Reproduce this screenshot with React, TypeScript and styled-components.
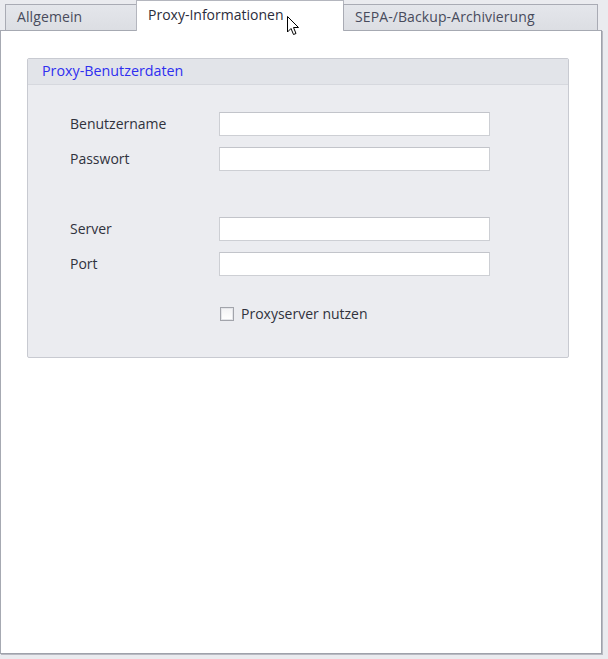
import * as React from 'react'
import styled, { createGlobalStyle } from 'styled-components'

const GlobalStyle = createGlobalStyle`
	html, body {
		margin: 0;
		padding: 0;
		background: #eaebef;
	}
	body {
		font-family: "Open Sans", "Noto Sans", "Liberation Sans", sans-serif;
		font-size: 14px;
	}
`

const Window = styled.div`
	position: relative;
	width: 608px;
	height: 659px;
	background: #eaebef;
	overflow: hidden;
`

const TabStrip = styled.div`
	display: flex;
	align-items: flex-end;
	height: 30px;
	padding-left: 5px;
	position: relative;
	z-index: 2;
`

const Tab = styled.div<{ $active?: boolean; $width: number }>`
	box-sizing: border-box;
	width: ${p => p.$width}px;
	height: ${p => (p.$active ? 31 : 26)}px;
	margin-left: -1px;
	margin-bottom: ${p => (p.$active ? -1 : 0)}px;
	padding-left: 11px;
	padding-top: ${p => (p.$active ? 5 : 3)}px;
	border: 1px solid ${p => (p.$active ? '#b4b6be' : '#a9abb4')};
	border-bottom: none;
	background: ${p => (p.$active ? '#ffffff' : 'linear-gradient(#e4e6eb, #dcdee3)')};
	color: ${p => (p.$active ? '#2b2d3c' : '#484b5c')};
	font-size: 14px;
	line-height: 18px;
	letter-spacing: ${p => (p.$active ? 0 : 0.1)}px;
	white-space: nowrap;
	&:first-child {
		margin-left: 0;
	}
`

const Panel = styled.div`
	box-sizing: border-box;
	width: 602px;
	height: 624px;
	background: #ffffff;
	border: 1px solid #a6a9b2;
	border-right-color: #9fa2ab;
	border-bottom-color: #9fa2ab;
	box-shadow: 1px 1px 0 #b8bac2;
	padding: 27px 0 0 26px;
`

const GroupBox = styled.div`
	box-sizing: border-box;
	width: 542px;
	height: 300px;
	border: 1px solid #c8cad1;
	border-radius: 2px;
	background: #ebecf0;
	display: flex;
	flex-direction: column;
`

const GroupHeader = styled.div`
	height: 25px;
	padding-left: 14px;
	background: #e2e4e9;
	border-bottom: 1px solid #d6d8de;
	color: #2f2ff0;
	font-size: 14.3px;
	line-height: 23px;
`

const GroupBody = styled.div`
	display: flex;
	flex-direction: column;
	padding: 27px 0 0 42px;
`

const FieldRow = styled.div<{ $gap?: number }>`
	display: flex;
	align-items: center;
	height: 24px;
	margin-top: ${p => p.$gap ?? 0}px;
`

const Label = styled.div`
	width: 149px;
	margin-top: -2px;
	color: #30323d;
	font-size: 14px;
`

const TextBox = styled.div`
	box-sizing: border-box;
	width: 271px;
	height: 24px;
	background: #ffffff;
	border: 1px solid #cdcfd4;
	border-top-color: #c2c4ca;
`

const CheckRow = styled.label`
	display: flex;
	align-items: center;
	margin-top: 30px;
	margin-left: 150px;
	height: 16px;
	color: #30323d;
	font-size: 14px;
`

const CheckText = styled.span`
	margin-top: -2px;
`

const CheckBox = styled.span`
	box-sizing: border-box;
	display: inline-block;
	width: 14px;
	height: 14px;
	margin-right: 7px;
	border: 1px solid #a2a4ab;
	background: linear-gradient(#f2f2f4, #ffffff);
	box-shadow: inset 0 0 0 1px #e4e5e9;
`

const Cursor = styled.svg`
	position: absolute;
	left: 287px;
	top: 16px;
	z-index: 5;
`

export default function App() {
	return (
		<Window>
			<GlobalStyle />
			<TabStrip>
				<Tab $width={132}>Allgemein</Tab>
				<Tab $active $width={208}>Proxy-Informationen</Tab>
				<Tab $width={255}>SEPA-/Backup-Archivierung</Tab>
			</TabStrip>
			<Panel>
				<GroupBox>
					<GroupHeader>Proxy-Benutzerdaten</GroupHeader>
					<GroupBody>
						<FieldRow>
							<Label>Benutzername</Label>
							<TextBox />
						</FieldRow>
						<FieldRow $gap={11}>
							<Label>Passwort</Label>
							<TextBox />
						</FieldRow>
						<FieldRow $gap={46}>
							<Label>Server</Label>
							<TextBox />
						</FieldRow>
						<FieldRow $gap={11}>
							<Label>Port</Label>
							<TextBox />
						</FieldRow>
						<CheckRow>
							<CheckBox />
							<CheckText>Proxyserver nutzen</CheckText>
						</CheckRow>
					</GroupBody>
				</GroupBox>
			</Panel>
			<Cursor width="13" height="20" viewBox="0 0 13 20">
				<path d="M0.5 0.5 L0.5 16 L4 12.5 L6.5 18.5 L9 17.5 L6.5 11.5 L11.5 11.5 Z" fill="#fff" stroke="#000" strokeWidth="1" strokeLinejoin="miter" />
			</Cursor>
		</Window>
	)
}
